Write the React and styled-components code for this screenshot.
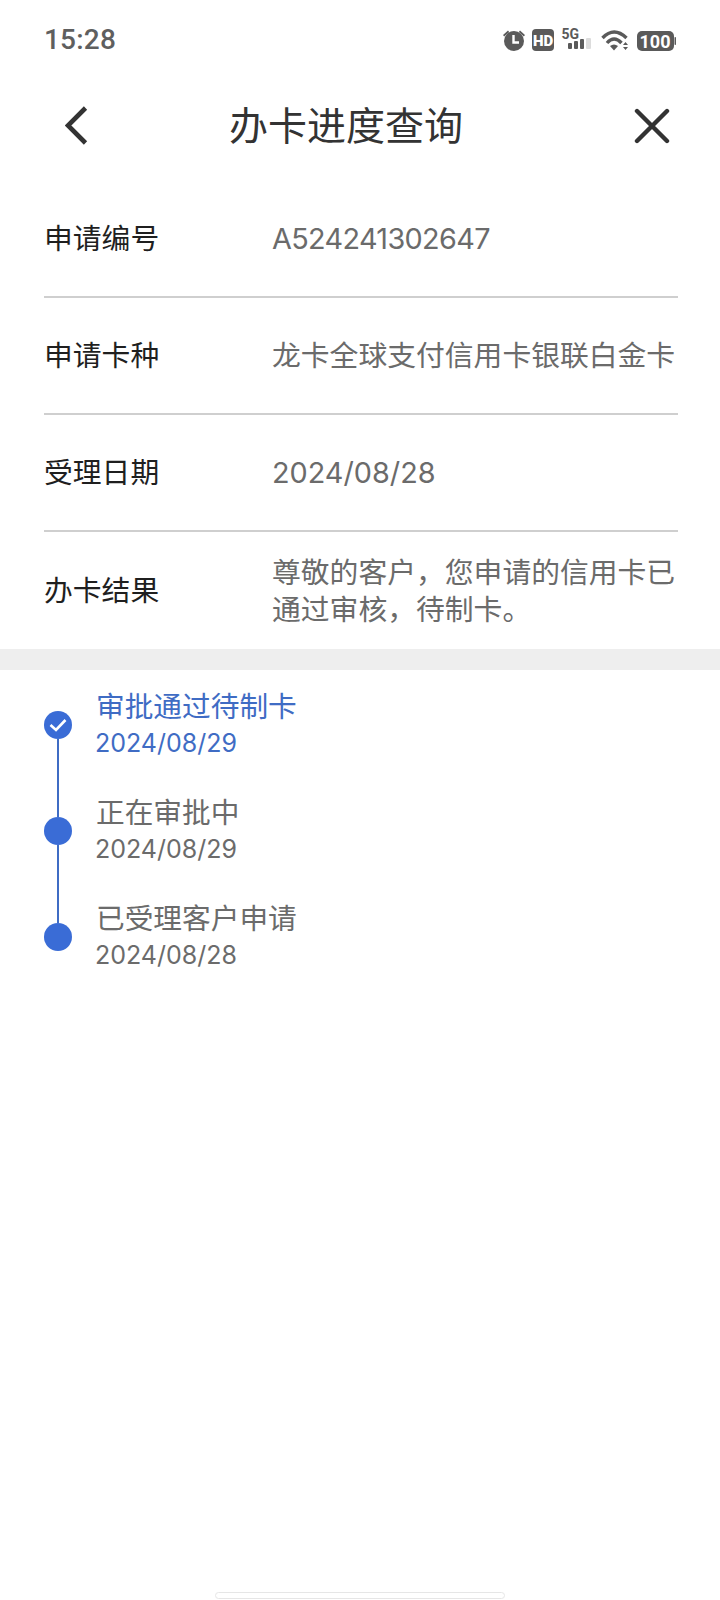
import React from 'react'
import styled, { createGlobalStyle } from 'styled-components'

const GlobalStyle = createGlobalStyle`
    html, body {
        margin: 0;
        padding: 0;
        background: #fff;
    }
    body {
        font-family: Inter, "Noto Sans CJK SC", sans-serif;
    }
`

const Page = styled.div`
    width: 720px;
    height: 1600px;
    display: flex;
    flex-direction: column;
    background: #fff;
    overflow: hidden;
`

const StatusBar = styled.div`
    height: 78px;
    flex-shrink: 0;
    padding: 0 44px;
    display: flex;
    align-items: center;
    justify-content: space-between;
    box-sizing: border-box;
`

const Clock = styled.span`
    font-family: Roboto, sans-serif;
    font-size: 28px;
    font-weight: 500;
    letter-spacing: 0.2px;
    color: #5f5f5f;
`

const StatusIcons = styled.div`
    display: flex;
    align-items: center;
    margin-right: -1px;
`

const NavBar = styled.div`
    height: 96px;
    margin-bottom: 7px;
    padding: 0 50px 0 65px;
    flex-shrink: 0;
    display: grid;
    grid-template-columns: 164px 1fr auto;
    align-items: center;
`

const Title = styled.div`
    font-size: 39px;
    line-height: 48px;
    color: #333;
`

const InfoList = styled.div`
    padding: 0 42px 0 44px;
`

const InfoRow = styled.div`
    height: 117px;
    box-sizing: border-box;
    display: grid;
    grid-template-columns: 228px 1fr;
    align-items: center;
    border-bottom: ${(p) => (p.$last ? 'none' : '2px solid #cfcfcf')};
`

const Label = styled.div`
    font-size: 28.8px;
    line-height: 37px;
    color: #1f1f1f;
`

const Value = styled.div`
    font-size: 28.8px;
    line-height: 37px;
    color: #6b6b6b;
    white-space: pre-line;
    letter-spacing: ${(p) => (p.$tight ? '-0.65px' : '0')};
`

const Band = styled.div`
    height: 21px;
    flex-shrink: 0;
    background: #eeeeee;
`

const Timeline = styled.div`
    padding: 19px 0 0 44px;
`

const Step = styled.div`
    height: 106px;
    display: flex;
`

const Rail = styled.div`
    width: 28px;
    display: flex;
    flex-direction: column;
    align-items: center;
    margin-right: 24px;
`

const RailLine = styled.div`
    width: 2px;
    background: ${(p) => (p.$hidden ? 'transparent' : '#3f6cc4')};
    height: ${(p) => (p.$grow ? 'auto' : '22px')};
    flex: ${(p) => (p.$grow ? '1' : 'none')};
`

const Dot = styled.div`
    width: 28px;
    height: 28px;
    border-radius: 50%;
    flex-shrink: 0;
    background: #3a6cd6;
    display: flex;
    align-items: center;
    justify-content: center;
`

const StepText = styled.div`
    display: flex;
    flex-direction: column;
    color: ${(p) => (p.$active ? '#3f6cc4' : '#6b6b6b')};
`

const StepTitle = styled.div`
    font-size: 28.7px;
    line-height: 36px;
`

const StepDate = styled.div`
    font-size: 25px;
    line-height: 36px;
    margin-left: -1px;
`

const HomeBar = styled.div`
    width: 290px;
    height: 7px;
    margin: auto auto 1px;
    box-sizing: border-box;
    border: 1px solid #e6e6e6;
    border-radius: 4px;
    background: #fff;
`

const rows = [
    { label: '申请编号', value: 'A524241302647', tight: true },
    { label: '申请卡种', value: '龙卡全球支付信用卡银联白金卡' },
    { label: '受理日期', value: '2024/08/28' },
    { label: '办卡结果', value: '尊敬的客户，您申请的信用卡已\n通过审核，待制卡。' },
]

const steps = [
    { title: '审批通过待制卡', date: '2024/08/29', active: true },
    { title: '正在审批中', date: '2024/08/29' },
    { title: '已受理客户申请', date: '2024/08/28' },
]

function StatusGlyphs() {
    return (
        <svg width="176" height="30" viewBox="0 0 176 30">
            {/* alarm */}
            <g fill="#5a5a5a">
                <circle cx="13" cy="17" r="10" />
                <path d="M2 11 L7 6.5 L8.2 8 L3.2 12.4Z M24 11 L19 6.5 L17.8 8 L22.8 12.4Z" />
            </g>
            <path d="M12.5 11 V18.5 H18" fill="none" stroke="#fff" strokeWidth="2.4" />
            {/* HD */}
            <rect x="31" y="5" width="22" height="22" rx="4" fill="#5a5a5a" />
            <text x="42" y="21.5" textAnchor="middle" fontSize="15" fontWeight="900" fill="#fff" fontFamily="Roboto, sans-serif">HD</text>
            {/* 5G + signal */}
            <text x="60.5" y="15" fontSize="14" fontWeight="700" fill="#5a5a5a" fontFamily="Roboto, sans-serif">5G</text>
            <g fill="#5a5a5a">
                <rect x="67" y="19" width="4" height="6" rx="1" />
                <rect x="73" y="17" width="4" height="8" rx="1" />
                <rect x="79" y="15" width="4" height="10" rx="1" />
            </g>
            <rect x="85" y="14" width="5" height="11" rx="1" fill="#dcdcdc" />
            {/* wifi */}
            <g fill="none" stroke="#5a5a5a" strokeWidth="3.4">
                <path d="M101.5 14 Q113 2 125.5 14" />
                <path d="M106 19 Q113 11 120.5 19" />
            </g>
            <path d="M109 22 Q113 19 117 22 L113 26.5Z" fill="#5a5a5a" />
            <path d="M122 21 L124.5 18 L127 21Z M122 23 L124.5 26 L127 23Z" fill="#5a5a5a" />
            {/* battery */}
            <rect x="136" y="7" width="37" height="20" rx="5" fill="#5a5a5a" />
            <rect x="173.5" y="13" width="1.5" height="8" rx="0.7" fill="#5a5a5a" />
            <text x="154" y="23.5" textAnchor="middle" fontSize="18" fontWeight="700" fill="#fff" fontFamily="Roboto, sans-serif">100</text>
        </svg>
    )
}

function App() {
    return (
        <Page>
            <GlobalStyle />
            <StatusBar>
                <Clock>15:28</Clock>
                <StatusIcons>
                    <StatusGlyphs />
                </StatusIcons>
            </StatusBar>
            <NavBar>
                <svg width="24" height="42" viewBox="0 0 24 42">
                    <path d="M20.5 3 L3 20.5 L20.5 38" fill="none" stroke="#333" strokeWidth="4.6" />
                </svg>
                <Title>办卡进度查询</Title>
                <svg width="36" height="36" viewBox="0 0 36 36">
                    <path d="M3 3 L33 33 M33 3 L3 33" fill="none" stroke="#333" strokeWidth="4.4" strokeLinecap="round" />
                </svg>
            </NavBar>
            <InfoList>
                {rows.map((row, i) => (
                    <InfoRow key={row.label} $last={i === rows.length - 1}>
                        <Label>{row.label}</Label>
                        <Value $tight={row.tight}>{row.value}</Value>
                    </InfoRow>
                ))}
            </InfoList>
            <Band />
            <Timeline>
                {steps.map((step, i) => (
                    <Step key={step.title}>
                        <Rail>
                            <RailLine $hidden={i === 0} />
                            <Dot>
                                {step.active && (
                                    <svg width="20" height="16" viewBox="0 0 20 16">
                                        <path d="M2.5 8 L8 13 L17.5 3" fill="none" stroke="#fff" strokeWidth="2.6" />
                                    </svg>
                                )}
                            </Dot>
                            <RailLine $grow $hidden={i === steps.length - 1} />
                        </Rail>
                        <StepText $active={step.active}>
                            <StepTitle>{step.title}</StepTitle>
                            <StepDate>{step.date}</StepDate>
                        </StepText>
                    </Step>
                ))}
            </Timeline>
            <HomeBar />
        </Page>
    )
}

export default App
